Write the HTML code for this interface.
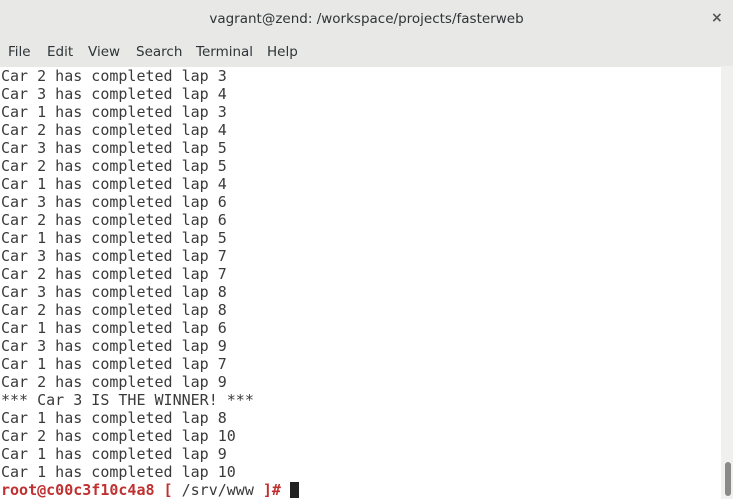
<!DOCTYPE html>
<html><head><style>
body{margin:0;width:733px;height:499px;overflow:hidden;background:#e8e8e7;font-family:"DejaVu Sans","Liberation Sans",sans-serif;position:relative}
.title{position:absolute;top:1px;left:0;width:733px;height:38px;line-height:36px;text-align:center;font-size:13.5px;color:#2e3436}
.x{position:absolute;left:711px;top:10px;font-size:14px;color:#555;font-weight:bold}
.menu{position:absolute;top:38px;left:0;height:28px;line-height:28px;font-size:13.5px;color:#2e3436}
.menu span{position:absolute;top:0;white-space:nowrap}
.term{position:absolute;top:67px;left:0;width:721px;height:432px;background:#fff}
pre{margin:0;font-family:"DejaVu Sans Mono",monospace;font-size:15px;line-height:18px;color:#3a3a3a;padding-left:1px}
.r{color:#c03030;font-weight:bold}
.cur{display:inline-block;width:9px;height:16px;background:#222;vertical-align:-3px}
.sb{position:absolute;left:721px;top:66px;width:12px;height:433px;background:#f0f0ef}
.th{position:absolute;left:725px;top:462px;width:6px;height:34px;background:#8a8a8a;border-radius:3px}
</style></head><body>
<div class="title">vagrant@zend: /workspace/projects/fasterweb</div>
<div class="x">×</div>
<div class="menu"><span style="left:8px">File</span><span style="left:47px">Edit</span><span style="left:88px">View</span><span style="left:136px">Search</span><span style="left:196px">Terminal</span><span style="left:267px">Help</span></div>
<div class="term"><pre>Car 2 has completed lap 3
Car 3 has completed lap 4
Car 1 has completed lap 3
Car 2 has completed lap 4
Car 3 has completed lap 5
Car 2 has completed lap 5
Car 1 has completed lap 4
Car 3 has completed lap 6
Car 2 has completed lap 6
Car 1 has completed lap 5
Car 3 has completed lap 7
Car 2 has completed lap 7
Car 3 has completed lap 8
Car 2 has completed lap 8
Car 1 has completed lap 6
Car 3 has completed lap 9
Car 1 has completed lap 7
Car 2 has completed lap 9
*** Car 3 IS THE WINNER! ***
Car 1 has completed lap 8
Car 2 has completed lap 10
Car 1 has completed lap 9
Car 1 has completed lap 10
<span class="r">root@c00c3f10c4a8 [</span> /srv/www <span class="r">]#</span> <span class="cur"></span></pre></div>
<div class="sb"></div><div class="th"></div>
</body></html>
